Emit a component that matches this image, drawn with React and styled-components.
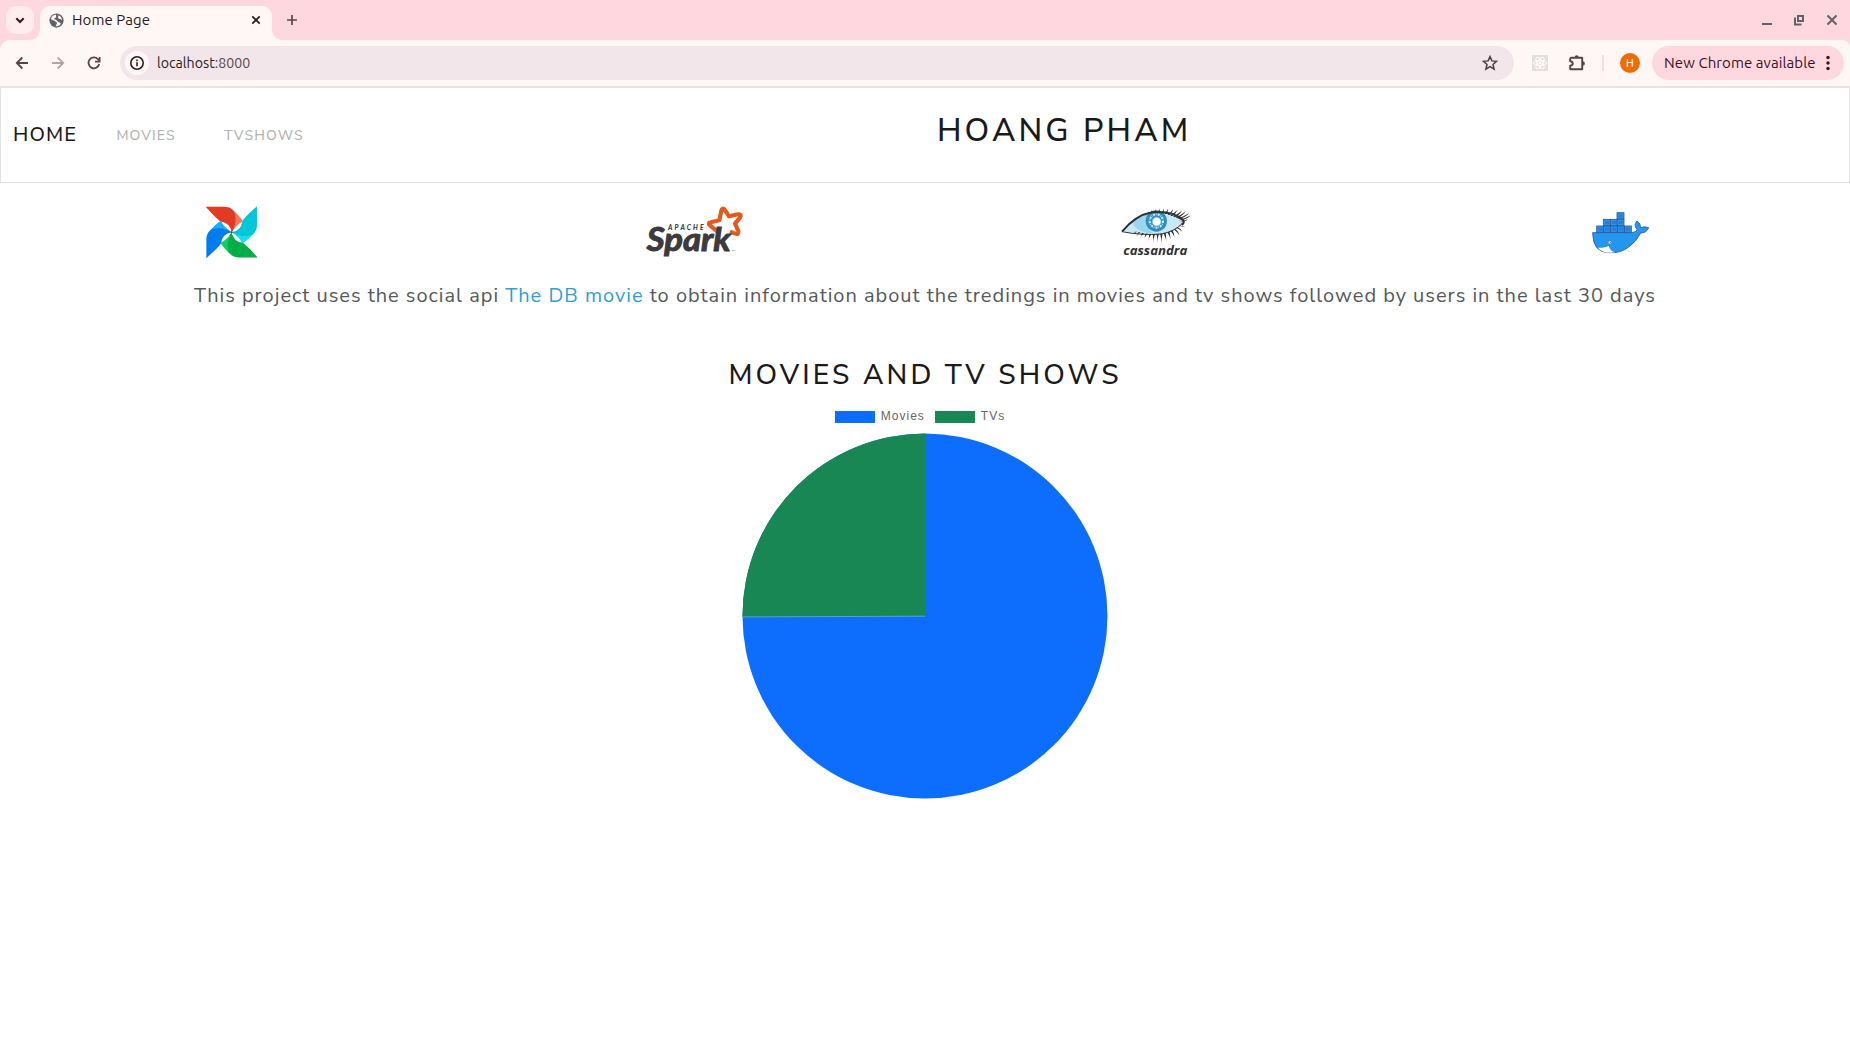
import React from "react";
import styled, { createGlobalStyle } from "styled-components";

const GlobalStyle = createGlobalStyle`
  *, *::before, *::after { box-sizing: border-box; }
  body {
    margin: 0;
    background: #fff;
    color: #55595c;
    font-family: "Nunito Sans", Lato, sans-serif;
  }
`;

const Window = styled.div`
  display: flex;
  flex-direction: column;
  height: 1053px;
  overflow: hidden;
`;

/* Browser chrome */

const chromeFont = `Ubuntu, "Noto Sans", sans-serif`;

const TabStrip = styled.div`
  display: flex;
  align-items: flex-end;
  height: 40px;
  padding-left: 6px;
  background: #ffd8df;
  font-family: ${chromeFont};
`;

const TabSearch = styled.div`
  display: flex;
  align-items: center;
  justify-content: center;
  width: 28px;
  height: 28px;
  margin-bottom: 6px;
  border-radius: 10px;
  background: #ffecef;
`;

const Flare = styled.div`
  width: 10px;
  height: 10px;
  margin-left: ${(p) => (p.$side === "left" ? "-4px" : "0")};
  background: radial-gradient(
    circle at ${(p) => (p.$side === "left" ? "0 0" : "100% 0")},
    transparent 9.5px,
    #fff7f6 10.2px
  );
`;

const Tab = styled.div`
  display: flex;
  align-items: center;
  width: 232px;
  height: 34px;
  padding: 0 10px 6px 9px;
  border-radius: 10px 10px 0 0;
  background: #fff7f6;
  color: #2b1a1e;
  font-size: 15px;
  line-height: 20px;
  letter-spacing: 0.08px;
`;

const TabTitle = styled.span`
  flex: 1;
  margin-left: 8px;
  white-space: nowrap;
`;

const NewTab = styled.div`
  display: flex;
  margin: 0 0 14px 4px;
`;

const WindowButtons = styled.div`
  display: flex;
  align-items: center;
  gap: 17px;
  height: 40px;
  margin: 0 10px 0 auto;
`;

const ToolbarBack = styled.div`
  background: #ffd8df;
`;

const Toolbar = styled.div`
  display: flex;
  align-items: center;
  height: 48px;
  padding: 0 6px 0 10px;
  border-bottom: 2px solid #efdfe2;
  border-radius: 10px 8px 0 0;
  background: #fff7f6;
  font-family: ${chromeFont};
`;

const NavButton = styled.div`
  display: flex;
  align-items: center;
  justify-content: center;
  width: 24px;
  height: 24px;
  margin-right: 12px;
  opacity: ${(p) => (p.$disabled ? 0.45 : 1)};
`;

const AddressBar = styled.div`
  display: flex;
  align-items: center;
  width: 1394px;
  height: 34px;
  margin-left: 2px;
  padding: 0 16px 0 5px;
  border-radius: 17px;
  background: #f2e6ea;
  color: #2a1d21;
  font-size: 14.2px;
`;

const SiteInfo = styled.div`
  display: flex;
  align-items: center;
  justify-content: center;
  width: 24px;
  height: 24px;
  margin-right: 8px;
  border-radius: 50%;
  background: #fff7f6;
`;

const Address = styled.span`
  flex: 1;
`;

const Port = styled.span`
  color: #5b474c;
`;

const Extensions = styled.div`
  display: flex;
  align-items: center;
  margin-left: 18px;
`;

const ExtensionTile = styled.div`
  display: flex;
  align-items: center;
  justify-content: center;
  width: 16px;
  height: 16px;
  margin-right: 20px;
  background: #e2dfde;
`;

const Divider = styled.div`
  width: 2px;
  height: 16px;
  margin: 0 16px;
  background: #ffd8df;
`;

const Avatar = styled.div`
  width: 20px;
  height: 20px;
  margin-right: 12px;
  border-radius: 50%;
  background: #ef6c00;
  color: #fff;
  font: 11px/21px Roboto, sans-serif;
  text-align: center;
`;

const UpdatePill = styled.div`
  display: flex;
  align-items: center;
  justify-content: space-between;
  width: 192px;
  height: 34px;
  padding: 0 14px 0 12px;
  border-radius: 17px;
  background: #ffd8df;
  color: #40101d;
  font-size: 15px;
  letter-spacing: 0.08px;
  white-space: nowrap;
`;

const PillLabel = styled.span`
  padding-bottom: 2px;
`;

/* Page */

const Navbar = styled.nav`
  display: flex;
  align-items: center;
  height: 95px;
  padding: 0 12px 1px;
  border: 1px solid #e2e2e2;
  border-top: none;
  white-space: nowrap;
`;

const Brand = styled.a`
  width: 103.5px;
  color: #1a1a1a;
  font-size: 20px;
  font-weight: 500;
  letter-spacing: 1.1px;
`;

const NavLink = styled.a`
  width: 107.5px;
  padding-top: 2px;
  color: #b3b3b3;
  font-size: 14px;
  font-weight: 500;
  letter-spacing: 1.1px;
`;

const Owner = styled.h2`
  margin: 0 0 8px 605.5px;
  color: #1a1a1a;
  font-size: 32px;
  font-weight: 500;
  line-height: 38px;
  letter-spacing: 3.1px;
`;

const Logos = styled.section`
  display: grid;
  grid-template-columns: repeat(4, 1fr);
  height: 98px;
`;

const LogoCell = styled.div`
  display: flex;
  align-items: center;
  justify-content: center;
`;

const Intro = styled.p`
  margin: 0;
  font-size: 20px;
  line-height: 29px;
  letter-spacing: 1px;
  text-align: center;
  white-space: nowrap;
`;

const Link = styled.a`
  color: #2f9fd0;
`;

const ChartTitle = styled.h3`
  margin: 48px 0 0;
  color: #1a1a1a;
  font-size: 28px;
  font-weight: 500;
  line-height: 34px;
  letter-spacing: 3.12px;
  text-align: center;
`;

const Chart = styled.figure`
  display: flex;
  flex-direction: column;
  align-items: center;
  margin: 16px 0 0;
`;

const Legend = styled.div`
  display: flex;
  gap: 10px;
  height: 25px;
  margin-right: 10px;
`;

const LegendItem = styled.div`
  display: flex;
  align-items: center;
  height: 15px;
  color: #666;
  font: 12px/14px "Liberation Sans", Arial, sans-serif;
  letter-spacing: 1px;
`;

const Swatch = styled.span`
  width: 40px;
  height: 12px;
  margin: 2px 6px 0 0;
  background: ${(p) => p.$color};
`;

const Icon = ({ size = 20, box = 24, children }) => (
  <svg width={size} height={size} viewBox={`0 0 ${box} ${box}`} fill="none">
    {children}
  </svg>
);

const Globe = () => (
  <Icon size={15} box={16}>
    <circle cx="8" cy="8" r="7.6" fill="#5f6368" />
    <path
      d="M7.3 1.7C5 2 2.8 3.600 2 6c1 1.500 2.600 1.700 4.300 2.200.8.4.6 1.500 1.500 1.700 1 .3 1 .8.5 1.500-.6.8-.8 1.600-1.300 2.700 1.900.3 4.400-.6 5.600-2.400-.3-1.500-1.300-1.800-2.600-2.200-.8-.4-1-1.500-2-1.900C7.200 7.100 5.600 7.300 5.500 6.200c0-1 1.300-.8 1.900-1.500.5-.7-.2-1.300.2-2z"
      fill="#fff7f6"
    />
    <path d="M10 2.300c-.5 1 .2 1.700-.3 2.500-.4.7.6 1.300 1.500 1.200 1 0 1.300 1.100 2.700 1.200C13.700 5 12.200 3 10 2.300z" fill="#fff7f6" />
  </Icon>
);

const Airflow = () => {
  const blades = [
    ["#e23b24", "#ff7357"],
    ["#00c7d8", "#11e1ee"],
    ["#00ad46", "#04d659"],
    ["#017cee", "#14b1ff"],
  ];
  return (
    <svg width="55" height="55" viewBox="43 45.500 162 162">
      {blades.map(([main, light], i) => (
        <g key={main} transform={`rotate(${i * 90} 124.500 125.500)`}>
          <path d="M128 60Q150 80 158 94Q140 101 124.500 125.500Z" fill={light} />
          <path d="M48 51H106C126 53 136 65 136 83Q137 105 124.500 125.500Q120 98 92 94Q84 91 48 51Z" fill={main} />
        </g>
      ))}
      <circle cx="124.500" cy="125.500" r="3" fill="#5c4640" />
    </svg>
  );
};

const Spark = () => (
  <svg width="100" height="56" viewBox="40 42 300 168">
    <path
      d="M263 127L238 106Q230 99 240 97L266 91L272 62Q276 49 284 62L295 79L322 73Q335 72 328 83L313 101L323 123Q325 135 314 131L298 125"
      fill="none"
      stroke="#e25a1c"
      strokeWidth="12.500"
      strokeLinejoin="round"
    />
    <g fill="#3c3a3e" fontFamily="Lato, sans-serif" fontStyle="italic">
      <text x="112" y="119" fontSize="20" fontWeight="900" textLength="107">APACHE</text>
      <text x="48" y="184" fontSize="96" fontWeight="700" stroke="#3c3a3e" strokeWidth="3" textLength="252" lengthAdjust="spacingAndGlyphs">Spark</text>
      <text x="303" y="184" fontSize="8">TM</text>
    </g>
  </svg>
);

const lashes = [
  [131, 69, 123, 62], [141, 67, 136, 58], [151, 67, 148, 56], [161, 68, 161, 55],
  [170, 70, 174, 55], [179, 72, 187, 55], [188, 75, 202, 56], [196, 78, 215, 58],
  [204, 81, 228, 61], [211, 84, 239, 63], [217, 87, 249, 69], [222, 91, 254, 76],
  [226, 95, 248, 86], [226, 101, 240, 99], [222, 107, 238, 112],
  [214, 113, 229, 125], [206, 118, 220, 135], [197, 122, 206, 143], [187, 126, 194, 148],
  [176, 129, 181, 154], [166, 131, 167, 160], [155, 132, 155, 158], [144, 132, 141, 162],
  [133, 132, 127, 157], [122, 131, 113, 155], [111, 129, 101, 149], [100, 127, 91, 141], [90, 125, 82, 134],
];

const Cassandra = () => (
  <svg width="74" height="56" viewBox="39 42 222 168">
    <path d="M51 124Q90 70 150 68Q206 70 230 96Q210 126 160 133Q110 135 51 124Z" fill="#c8e8f6" />
    <path d="M80 101Q98 80 124 73Q118 112 142 130Q95 129 80 101Z" fill="#9bd6f0" />
    <circle cx="151" cy="93" r="32" fill="#2b8fbf" />
    <circle cx="151" cy="93" r="20" fill="none" stroke="#d4effb" strokeWidth="6" strokeDasharray="6 3 2 3" />
    <circle cx="152" cy="95" r="13" fill="#fff" stroke="#68c4e8" strokeWidth="2" />
    <path d="M48 125Q88 76 138 67Q202 62 232 91Q236 97 228 105" fill="none" stroke="#303033" strokeWidth="6" />
    <path d="M48 125Q110 137 165 132Q206 125 229 100" fill="none" stroke="#303033" strokeWidth="3" />
    {lashes.map(([x1, y1, x2, y2]) => (
      <path
        key={`${x1}-${y1}`}
        d={`M${x1 - 3.5} ${y1}Q${x2 - (x2 - x1) * 0.3} ${y1 + (y2 - y1) * 0.6} ${x2} ${y2}Q${x2 - (x2 - x1) * 0.2} ${y1 + (y2 - y1) * 0.4} ${x1 + 3.5} ${y1}Z`}
        fill="#303033"
      />
    ))}
    <text
      x="52"
      y="195"
      fontFamily="Open Sans, sans-serif"
      fontSize="38"
      fontStyle="italic"
      fontWeight="700"
      fill="#303033"
      textLength="192"
      lengthAdjust="spacingAndGlyphs"
    >
      cassandra
    </text>
  </svg>
);

const crates = [[126, 52], [85, 72], [106, 72], [126, 72], [65, 92], [85, 92], [106, 92], [127, 92], [148, 92]];

const Docker = () => (
  <svg width="64" height="46" viewBox="36 41 192 138">
    <path
      d="M53 112H170Q183 111 187 103Q174 91 186 77Q197 85 197 97Q208 92 221 97Q216 112 197 113Q184 139 161 155Q137 174 103 172Q53 172 53 112Z"
      fill="#2396ed"
      stroke="#3c63ae"
      strokeWidth="3"
    />
    <path d="M68 157Q90 158 101 151Q105 166 120 171Q84 176 68 157Z" fill="#fff" />
    <circle cx="105" cy="141" r="5" fill="#fff" stroke="#31548f" strokeWidth="1.500" />
    <circle cx="106" cy="141" r="2" fill="#31548f" />
    {crates.map(([x, y]) => (
      <g key={`${x}-${y}`} stroke="#31569f">
        <rect x={x} y={y} width="21" height="19" fill="#2396ed" strokeWidth="2.500" />
        <path d={`M${x + 7} ${y + 5}v9M${x + 11} ${y + 5}v9M${x + 15} ${y + 5}v9`} strokeWidth="1.500" />
      </g>
    ))}
    <circle cx="162" cy="168" r="1.800" fill="none" stroke="#7a9bd0" />
  </svg>
);

const Pie = () => (
  <svg width="366" height="366" viewBox="0 0 366 366">
    <circle cx="183" cy="183" r="182.500" fill="#0d6efd" />
    <path d="M183 183V.5A182.500 182.500 0 0 0 .5 184Z" fill="#198754" />
    <path d="M183 183.200L.5 183.900" stroke="#75b3cf" strokeWidth=".7" />
  </svg>
);

const logos = [Airflow, Spark, Cassandra, Docker];
const series = [
  { label: "Movies", color: "#0d6efd" },
  { label: "TVs", color: "#198754" },
];

export default function App() {
  return (
    <Window>
      <GlobalStyle />
      <TabStrip>
        <TabSearch>
          <Icon size={12} box={12}>
            <path d="M2.300 4.300L6 8l3.700-3.700" stroke="#2b1a1e" strokeWidth="2" />
          </Icon>
        </TabSearch>
        <Flare $side="left" />
        <Tab>
          <Globe />
          <TabTitle>Home Page</TabTitle>
          <Icon size={12} box={12}>
            <path d="M2.300 2.300l7.400 7.400M9.700 2.300L2.300 9.700" stroke="#2b1a1e" strokeWidth="1.700" />
          </Icon>
        </Tab>
        <Flare $side="right" />
        <NewTab>
          <Icon size={12} box={12}>
            <path d="M6 1v10M1 6h10" stroke="#5c4348" strokeWidth="1.700" />
          </Icon>
        </NewTab>
        <WindowButtons>
          <Icon size={16} box={16}>
            <path d="M4 12h10" stroke="#5f6368" strokeWidth="2" />
          </Icon>
          <Icon size={16} box={16}>
            <path d="M7 4h5v5H7zM4 5.500v7h6.500" stroke="#5f6368" strokeWidth="2" />
          </Icon>
          <Icon size={16} box={16}>
            <path d="M3.500 3.500l9 9M12.500 3.500l-9 9" stroke="#5f6368" strokeWidth="2" />
          </Icon>
        </WindowButtons>
      </TabStrip>

      <ToolbarBack>
        <Toolbar>
          <NavButton>
            <Icon size={16} box={16}>
              <path d="M14 8H3M8.300 2.500L2.800 8l5.500 5.500" stroke="#5c4348" strokeWidth="1.800" />
            </Icon>
          </NavButton>
          <NavButton $disabled>
            <Icon size={16} box={16}>
              <path d="M2 8h11M7.700 2.500L13.200 8l-5.500 5.500" stroke="#5c4348" strokeWidth="1.800" />
            </Icon>
          </NavButton>
          <NavButton>
            <Icon size={16} box={16}>
              <path d="M13.200 9A5.400 5.400 0 1 1 11.800 4.100L13.400 5.700M13.600 2v4.600H9" stroke="#5c4348" strokeWidth="1.800" />
            </Icon>
          </NavButton>
          <AddressBar>
            <SiteInfo>
              <Icon size={16} box={16}>
                <circle cx="8" cy="8" r="6.200" stroke="#2a1d21" strokeWidth="1.600" />
                <path d="M8 7.200v4M8 4.600v1.600" stroke="#2a1d21" strokeWidth="1.600" />
              </Icon>
            </SiteInfo>
            <Address>
              localhost<Port>:8000</Port>
            </Address>
            <Icon size={16} box={16}>
              <path
                d="M8 1.600l1.900 4.300 4.700.4L11 9.400l1.100 4.700L8 11.600l-4.100 2.500L5 9.400 1.400 6.300l4.700-.4z"
                stroke="#4d3c41"
                strokeWidth="1.500"
              />
            </Icon>
          </AddressBar>
          <Extensions>
            <ExtensionTile>
              <Icon size={16} box={16}>
                <g stroke="#fff" strokeWidth="1">
                  <ellipse cx="8" cy="8" rx="6.500" ry="2.500" />
                  <ellipse cx="8" cy="8" rx="6.500" ry="2.500" transform="rotate(60 8 8)" />
                  <ellipse cx="8" cy="8" rx="6.500" ry="2.500" transform="rotate(120 8 8)" />
                </g>
                <circle cx="8" cy="8" r="1.300" fill="#fff" />
              </Icon>
            </ExtensionTile>
            <Icon size={18} box={18}>
              <path
                d="M3.300 3.700H14.200V15.300H2.200V11.600C5.600 11.300 5.600 7.600 2.200 7.200V4.700Q2.200 3.700 3.300 3.700Z"
                stroke="#5c4348"
                strokeWidth="1.900"
                strokeLinejoin="round"
              />
              <path d="M6.700 3.200a2 2 0 0 1 4 0zM14.700 7.300a2 2 0 0 1 0 4.400z" fill="#5c4348" />
            </Icon>
            <Divider />
            <Avatar>H</Avatar>
          </Extensions>
          <UpdatePill>
            <PillLabel>New Chrome available</PillLabel>
            <svg width="4" height="16" viewBox="0 0 4 16" fill="#40101d">
              <circle cx="2" cy="2.500" r="1.700" />
              <circle cx="2" cy="8" r="1.700" />
              <circle cx="2" cy="13.500" r="1.700" />
            </svg>
          </UpdatePill>
        </Toolbar>
      </ToolbarBack>

      <Navbar>
        <Brand>HOME</Brand>
        <NavLink>MOVIES</NavLink>
        <NavLink>TVSHOWS</NavLink>
        <Owner>HOANG PHAM</Owner>
      </Navbar>
      <Logos>
        {logos.map((Logo, i) => (
          <LogoCell key={i}>
            <Logo />
          </LogoCell>
        ))}
      </Logos>
      <Intro>
        This project uses the social api <Link>The DB movie</Link> to obtain information about the tredings in
        movies and tv shows followed by users in the last 30 days
      </Intro>
      <ChartTitle>MOVIES AND TV SHOWS</ChartTitle>
      <Chart>
        <Legend>
          {series.map(({ label, color }) => (
            <LegendItem key={label}>
              <Swatch $color={color} />
              {label}
            </LegendItem>
          ))}
        </Legend>
        <Pie />
      </Chart>
    </Window>
  );
}
